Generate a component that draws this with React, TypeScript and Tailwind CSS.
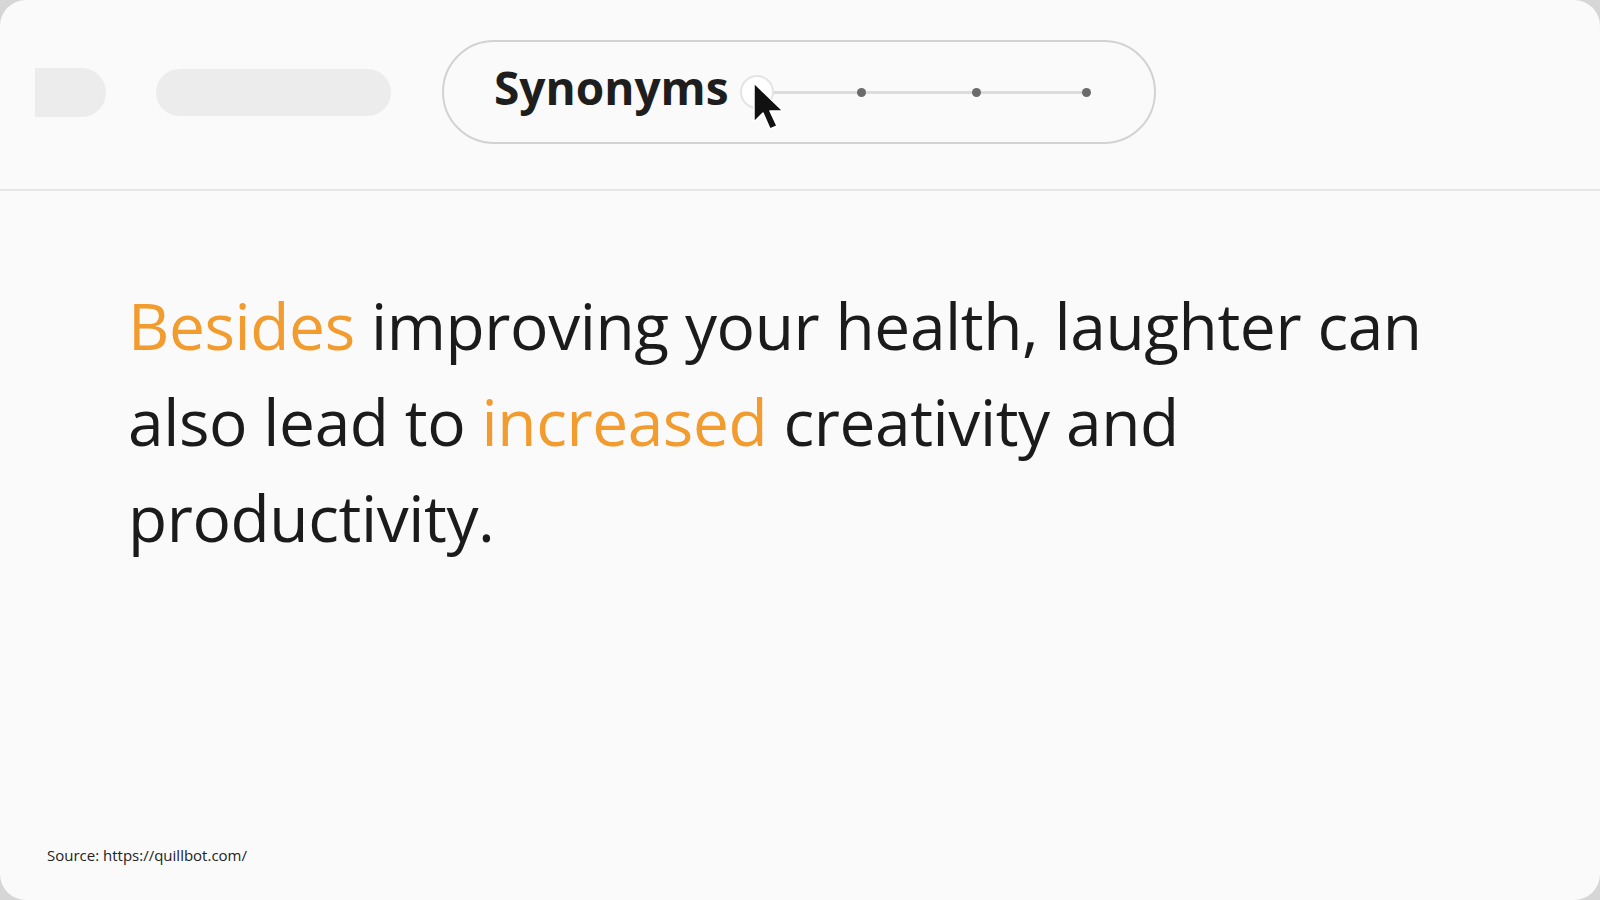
import React from "react";

const FONT = { fontFamily: '"Open Sans", "Noto Sans", sans-serif' };

function Cursor() {
  return (
    <svg width="34" height="50" viewBox="0 0 34 50" className="absolute left-[-2px] top-[-2px]">
      <path
        d="M2 2 L2 41 L11 32 L18 48 L25 45 L18 30 L31 30 Z"
        fill="#111"
        stroke="#fff"
        strokeWidth="1.5"
        strokeLinejoin="round"
      />
    </svg>
  );
}

function Slider() {
  const dots = [115, 230, 340];
  return (
    <div className="relative w-[350px] h-[30px]">
      <div className="absolute left-[15px] right-[6px] top-[14px] h-[3px] bg-[#dcdcdc] rounded-full" />
      {dots.map((x) => (
        <div
          key={x}
          className="absolute top-[11px] w-[9px] h-[9px] rounded-full bg-[#6b6b6b]"
          style={{ left: x }}
        />
      ))}
      <div className="absolute left-[-2px] top-[-2px] w-[34px] h-[34px] rounded-full bg-white border-2 border-[#e4e4e4]" />
      <div className="absolute left-[12px] top-[6px]">
        <Cursor />
      </div>
    </div>
  );
}

export default function App() {
  return (
    <div className="w-[1600px] h-[900px] bg-[#d6d6d6]" style={FONT}>
      <div className="w-full h-full rounded-[26px] bg-[#fafafa] flex flex-col overflow-hidden">
        <header className="h-[191px] shrink-0 flex items-start pt-[40px] pl-[35px] border-b-2 border-[#e6e6e6]">
          <div className="flex items-center gap-[50px] h-[104px]">
            <div className="w-[71px] h-[49px] bg-[#ececec] rounded-r-full" />
            <div className="w-[235px] h-[47px] bg-[#ececec] rounded-full" />
          </div>
          <div className="ml-[51px] w-[714px] h-[104px] rounded-full border-2 border-[#d2d2d2] flex items-center pl-[50px]">
            <span className="text-[46px] font-bold text-[#1e1e1e] leading-none mr-[13px] -mt-[11px]">
              Synonyms
            </span>
            <Slider />
          </div>
        </header>

        <main className="flex-1 pl-[128px] pr-[150px] pt-[87px]">
          <p className="text-[64px] leading-[96px] text-[#1b1b1b] tracking-[-0.4px]">
            <span className="text-[#f29b2f]">Besides</span> improving your health, laughter can also lead to{" "}
            <span className="text-[#f29b2f]">increased</span> creativity and productivity.
          </p>
        </main>

        <footer className="pl-[47px] pb-[33px]">
          <span className="text-[15px] text-[#222]">Source: https://quillbot.com/</span>
        </footer>
      </div>
    </div>
  );
}
